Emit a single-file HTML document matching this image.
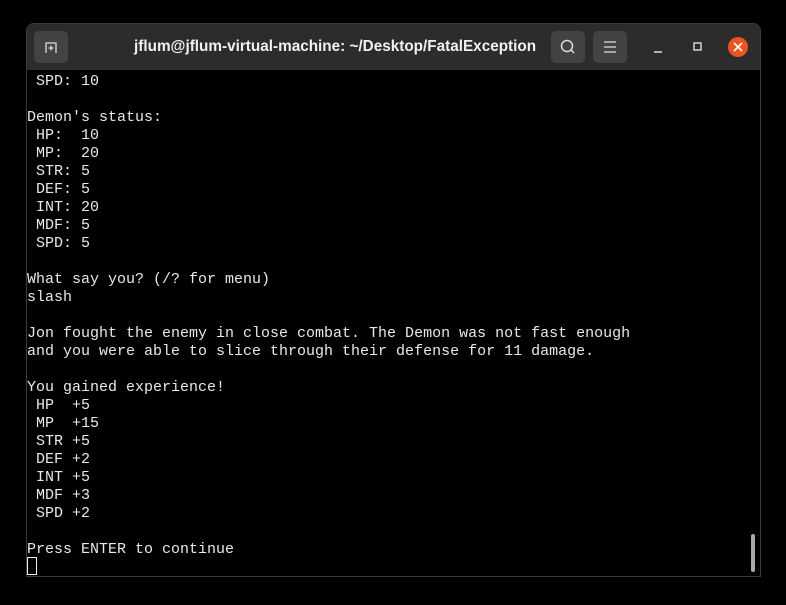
<!DOCTYPE html>
<html><head><style>
body{margin:0;width:786px;height:605px;background:#000;overflow:hidden;position:relative;font-family:"Liberation Sans",sans-serif}
.win{position:absolute;left:26px;top:23px;width:733px;height:552px;background:#000;border:1px solid #3a3a3a;border-radius:8px 8px 0 0;overflow:hidden}
.tb{position:absolute;left:0;top:0;width:733px;height:46px;background:#2c2c2c}
.btn{position:absolute;top:7px;width:34px;height:32px;background:#434343;border-radius:5px}
.title{position:absolute;left:107px;top:0;width:397px;text-align:center;line-height:46px;color:#f0f0f0;font-weight:bold;font-size:15.3px;white-space:nowrap}
pre{position:absolute;left:0;top:49px;margin:0;font-family:"Liberation Mono",monospace;font-size:15px;line-height:18px;color:#e8e8e8}
.cur{position:absolute;left:0;top:533px;width:8px;height:16px;border:1px solid #eee}
.sb{position:absolute;left:724px;top:510px;width:4px;height:38px;background:#aaa;border-radius:2px}
</style></head><body>
<div class="win">
<div class="tb">
<div class="btn" style="left:7px"><svg width="34" height="32"><path d="M12 22V12h10v10M14.5 17h5M17 14.5v5" stroke="#ddd" stroke-width="1.3" fill="none"/></svg></div>
<div class="title">jflum@jflum-virtual-machine: ~/Desktop/FatalException</div>
<div class="btn" style="left:524px"><svg width="34" height="32"><circle cx="16" cy="15" r="5.5" stroke="#ddd" stroke-width="1.5" fill="none"/><path d="M20 19l3 3" stroke="#ddd" stroke-width="1.5"/></svg></div>
<div class="btn" style="left:566px"><svg width="34" height="32"><path d="M11 11h12M11 16h12M11 21h12" stroke="#ddd" stroke-width="1.3"/></svg></div>
<svg style="position:absolute;left:620px;top:13px" width="110" height="22"><path d="M7 15h8" stroke="#ddd" stroke-width="1.5"/><rect x="47" y="6" width="7" height="7" stroke="#ddd" stroke-width="1.4" fill="none"/><circle cx="91" cy="10" r="10" fill="#e95420"/><path d="M87 6l8 8M95 6l-8 8" stroke="#fff" stroke-width="1.6"/></svg>
</div>
<pre> SPD: 10

Demon's status:
 HP:  10
 MP:  20
 STR: 5
 DEF: 5
 INT: 20
 MDF: 5
 SPD: 5

What say you? (/? for menu)
slash

Jon fought the enemy in close combat. The Demon was not fast enough
and you were able to slice through their defense for 11 damage.

You gained experience!
 HP  +5
 MP  +15
 STR +5
 DEF +2
 INT +5
 MDF +3
 SPD +2

Press ENTER to continue</pre>
<div class="cur"></div>
<div class="sb"></div>
</div>
</body></html>
